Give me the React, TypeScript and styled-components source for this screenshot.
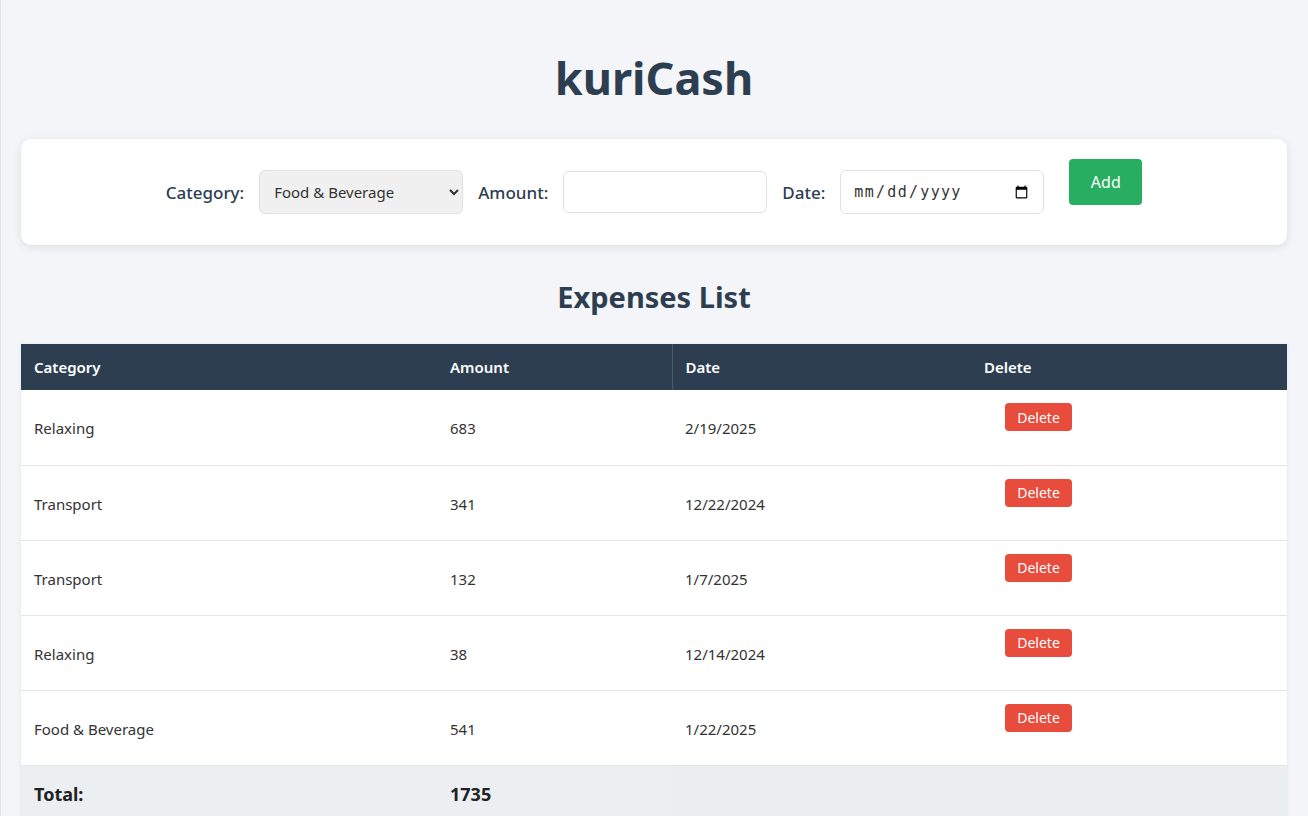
import React from "react";
import styled, { createGlobalStyle } from "styled-components";

const GlobalStyle = createGlobalStyle`
  html, body {
    margin: 0;
    padding: 0;
    background: #f4f5f9;
    font-family: "Noto Sans", "Open Sans", "Liberation Sans", sans-serif;
    color: #333;
  }
  body {
    border-left: 1px solid #e2e4ea;
  }
`;

const Page = styled.div`
  padding: 20px 21px 0 20px;
  min-height: 816px;
  box-sizing: border-box;
`;

const Title = styled.h1`
  margin: 34px 0 37px;
  text-align: center;
  font-size: 45px;
  line-height: 48px;
  font-weight: 700;
  color: #2c3e50;
`;

const Card = styled.form`
  background: #fff;
  border-radius: 10px;
  box-shadow: 0 2px 8px rgba(0, 0, 0, 0.1);
  padding: 20px;
  display: flex;
  justify-content: center;
  align-items: center;
  gap: 15px;
`;

const Label = styled.label`
  font-size: 17px;
  font-weight: 500;
  color: #2c3e50;
`;

const Select = styled.select`
  width: 204px;
  height: 44px;
  padding: 0 8px 0 10px;
  font-family: inherit;
  font-size: 15px;
  color: #333;
  background: #f0f0f0;
  border: 1px solid #e0e0e0;
  border-radius: 6px;
  box-sizing: border-box;
`;

const Input = styled.input`
  width: 204px;
  height: 42px;
  padding: 0 12px;
  font-family: inherit;
  font-size: 15px;
  background: #fff;
  border: 1px solid #e0e0e0;
  border-radius: 6px;
  box-sizing: border-box;
`;

const DateInput = styled(Input)`
  height: 44px;
  font-family: "DejaVu Sans Mono", "Liberation Mono", monospace;
  font-size: 15px;
  letter-spacing: 1.3px;
  color: #333;
`;

const AddButton = styled.button`
  margin: 0 0 20px 10px;
  width: 73px;
  height: 46px;
  background: #27ae60;
  color: #fff;
  border: none;
  border-radius: 4px;
  font-family: inherit;
  font-size: 16px;
  cursor: pointer;
`;

const SubTitle = styled.h2`
  margin: 35px 0 30px;
  text-align: center;
  font-size: 29px;
  line-height: 34px;
  font-weight: 700;
  color: #2c3e50;
`;

const Table = styled.table`
  width: 100%;
  border-collapse: collapse;
  table-layout: fixed;
  background: #fff;
  box-shadow: 0 1px 4px rgba(0, 0, 0, 0.08);
`;

const Th = styled.th<{ $divider?: boolean }>`
  background: #2c3e50;
  color: #fff;
  text-align: left;
  font-size: 15px;
  font-weight: 600;
  padding: 12px 13px;
  height: 46px;
  box-sizing: border-box;
  border-left: ${(p) => (p.$divider ? "1px solid #4a5b6c" : "none")};
`;

const Td = styled.td`
  font-size: 15px;
  color: #333;
  padding: 13px 13px 11px;
  vertical-align: middle;
  border-bottom: 1px solid #e4e6e8;
  height: 75px;
  box-sizing: border-box;
`;

const ActionTd = styled(Td)`
  vertical-align: top;
  padding-top: 12px;
  padding-left: 34px;
`;

const DeleteButton = styled.button`
  background: #e74c3c;
  color: #fff;
  border: none;
  border-radius: 4px;
  font-family: inherit;
  font-size: 14px;
  width: 67px;
  height: 28px;
  padding: 0;
  margin-top: 1px;
  cursor: pointer;
`;

const TotalTd = styled.td<{ $shade?: boolean }>`
  background: ${(p) => (p.$shade ? "#ebeef0" : "#eceff1")};
  font-size: 18px;
  font-weight: 700;
  color: #222;
  padding: 16px 13px 14px;
`;

const expenses = [
  { category: "Relaxing", amount: 683, date: "2/19/2025" },
  { category: "Transport", amount: 341, date: "12/22/2024" },
  { category: "Transport", amount: 132, date: "1/7/2025" },
  { category: "Relaxing", amount: 38, date: "12/14/2024" },
  { category: "Food & Beverage", amount: 541, date: "1/22/2025" },
];

export default function App() {
  const total = expenses.reduce((s, e) => s + e.amount, 0);
  return (
    <>
      <GlobalStyle />
      <Page>
        <Title>kuriCash</Title>
        <Card onSubmit={(e) => e.preventDefault()}>
          <Label>Category:</Label>
          <Select defaultValue="Food & Beverage">
            <option>Food &amp; Beverage</option>
            <option>Transport</option>
            <option>Relaxing</option>
          </Select>
          <Label>Amount:</Label>
          <Input type="number" />
          <Label>Date:</Label>
          <DateInput type="date" />
          <AddButton type="submit">Add</AddButton>
        </Card>
        <SubTitle>Expenses List</SubTitle>
        <Table>
          <colgroup>
            <col style={{ width: 416 }} />
            <col style={{ width: 235 }} />
            <col style={{ width: 299 }} />
            <col />
          </colgroup>
          <thead>
            <tr>
              <Th>Category</Th>
              <Th>Amount</Th>
              <Th $divider>Date</Th>
              <Th>Delete</Th>
            </tr>
          </thead>
          <tbody>
            {expenses.map((e, i) => (
              <tr key={i}>
                <Td>{e.category}</Td>
                <Td>{e.amount}</Td>
                <Td>{e.date}</Td>
                <ActionTd>
                  <DeleteButton type="button">Delete</DeleteButton>
                </ActionTd>
              </tr>
            ))}
            <tr>
              <TotalTd>Total:</TotalTd>
              <TotalTd>{total}</TotalTd>
              <TotalTd $shade />
              <TotalTd $shade />
            </tr>
          </tbody>
        </Table>
      </Page>
    </>
  );
}
